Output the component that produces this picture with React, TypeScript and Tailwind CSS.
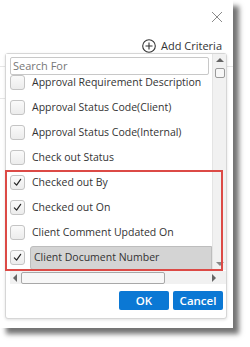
import { useState } from "react"

const items = [
  { label: "Approval Requirement Description", checked: false },
  { label: "Approval Status Code(Client)", checked: false },
  { label: "Approval Status Code(Internal)", checked: false },
  { label: "Check out Status", checked: false },
  { label: "Checked out By", checked: true },
  { label: "Checked out On", checked: true },
  { label: "Client Comment Updated On", checked: false },
  { label: "Client Document Number", checked: true, active: true },
]

function Checkbox({ checked }: { checked: boolean }) {
  return (
    <span className="flex items-center justify-center w-[15px] h-[15px] shrink-0 rounded-[3px] border border-[#c4c4c4] bg-gradient-to-b from-[#fafafa] to-[#ececec]">
      {checked && (
        <svg width="9" height="9" viewBox="0 0 10 10" fill="none">
          <path d="M1.5 5.5 L4 8 L8.5 1.5" stroke="#222" strokeWidth="1.3" strokeLinecap="round" strokeLinejoin="round" />
        </svg>
      )}
    </span>
  )
}

export default function App() {
  const [rows, setRows] = useState(items)

  const toggle = (i: number) =>
    setRows(rows.map((r, j) => (j === i ? { ...r, checked: !r.checked } : r)))

  return (
    <div className="w-[250px] h-[347px] bg-white font-['Open_Sans',sans-serif] text-[#333]">
      {/* Screenshot frame with drop shadow */}
      <div className="relative w-[233px] h-[328px] bg-white shadow-[6px_6px_5px_rgba(0,0,0,0.55)]">
        {/* Dialog header */}
        <div className="flex justify-end pt-[11px] pr-[10px]">
          <svg width="12" height="12" viewBox="0 0 12 12">
            <path d="M1 1 L11 11 M11 1 L1 11" stroke="#8a8a8a" strokeWidth="1" />
          </svg>
        </div>
        <div className="flex justify-end items-center gap-[5px] pr-[11px] mt-[15px] h-[15px]">
          <svg width="14" height="14" viewBox="0 0 14 14" fill="none">
            <circle cx="7" cy="7" r="6.3" stroke="#333" strokeWidth="1.1" />
            <path d="M7 3.5 V10.5 M3.5 7 H10.5" stroke="#333" strokeWidth="1.1" />
          </svg>
          <span className="text-[11px] leading-none">Add Criteria</span>
        </div>

        {/* Background table rows behind dropdown */}
        <div className="mt-[13px] border-t border-[#e6e6e6] h-[32px]" />
        <div className="border-t border-[#e6e6e6] w-[10px]" />

        {/* Dropdown panel */}
        <div className="absolute left-[5px] top-[53px] w-[222px] h-[266px] flex flex-col bg-white border border-[#d6d6d6] rounded-[3px] shadow-[0_1px_3px_rgba(0,0,0,0.12)]">
          <div className="flex h-[216px]">
            <div className="flex-1 flex flex-col min-w-0">
              <div className="pl-[4px] pr-[3px] pt-[3px] relative z-10 bg-white">
                <div className="h-[18px] border border-[#c8c8c8] rounded-[2px] flex items-center px-[2px] text-[11px] text-[#777] bg-white">
                  Search For
                </div>
              </div>
              <div className="flex-1 overflow-hidden">
                <div className="-mt-[5px]">
                  {rows.map((r, i) => (
                    <div
                      key={r.label}
                      onClick={() => toggle(i)}
                      className="flex items-center h-[25px] pl-[4px] gap-[5px] cursor-pointer"
                    >
                      <Checkbox checked={r.checked} />
                      <span
                        className={
                          r.active
                            ? "flex-1 h-[24px] flex items-center pl-[3px] text-[10.5px] whitespace-nowrap bg-[#d4d4d4] border border-[#bdbdbd] rounded-l-[3px]"
                            : "text-[10.5px] whitespace-nowrap pl-[2px]"
                        }
                      >
                        {r.label}
                      </span>
                    </div>
                  ))}
                </div>
              </div>
            </div>
            {/* Vertical scrollbar */}
            <div className="w-[14px] bg-[#f1f1f1] border-l border-[#e4e4e4] flex flex-col items-center pt-[4px] pb-[4px]">
              <span className="w-0 h-0 border-l-[4px] border-r-[4px] border-b-[4px] border-l-transparent border-r-transparent border-b-[#666]" />
              <span className="mt-[6px] w-[10px] h-[10px] rounded-[2px] border border-[#9a9a9a] bg-[#f7f7f7]" />
              <span className="flex-1" />
              <span className="w-0 h-0 border-l-[4px] border-r-[4px] border-t-[4px] border-l-transparent border-r-transparent border-t-[#888]" />
            </div>
          </div>

          {/* Horizontal scrollbar */}
          <div className="ml-[4px] mt-[1px] h-[13px] bg-[#f1f1f1] flex items-center">
            <span className="ml-[3px] w-0 h-0 border-t-[4px] border-b-[4px] border-r-[4px] border-t-transparent border-b-transparent border-r-[#666]" />
            <span className="ml-[4px] w-[144px] h-[12px] rounded-[2px] border border-[#a8a8a8] bg-[#f7f7f7]" />
            <span className="flex-1" />
            <span className="mr-[10px] w-0 h-0 border-t-[4px] border-b-[4px] border-l-[4px] border-t-transparent border-b-transparent border-l-[#666]" />
          </div>

          {/* Buttons */}
          <div className="flex justify-end gap-[4px] pr-[3px] mt-[7px]">
            <button className="w-[50px] h-[19px] rounded-[2px] bg-[#0b78d4] text-white text-[11.5px] font-semibold leading-none">
              OK
            </button>
            <button className="w-[50px] h-[19px] rounded-[2px] bg-[#0b78d4] text-white text-[11.5px] font-semibold leading-none">
              Cancel
            </button>
          </div>

          {/* Annotation highlight */}
          <div className="absolute left-[-1px] top-[116px] w-[218px] h-[101px] border-2 border-[#dc4a46] pointer-events-none" />
        </div>
      </div>
    </div>
  )
}
